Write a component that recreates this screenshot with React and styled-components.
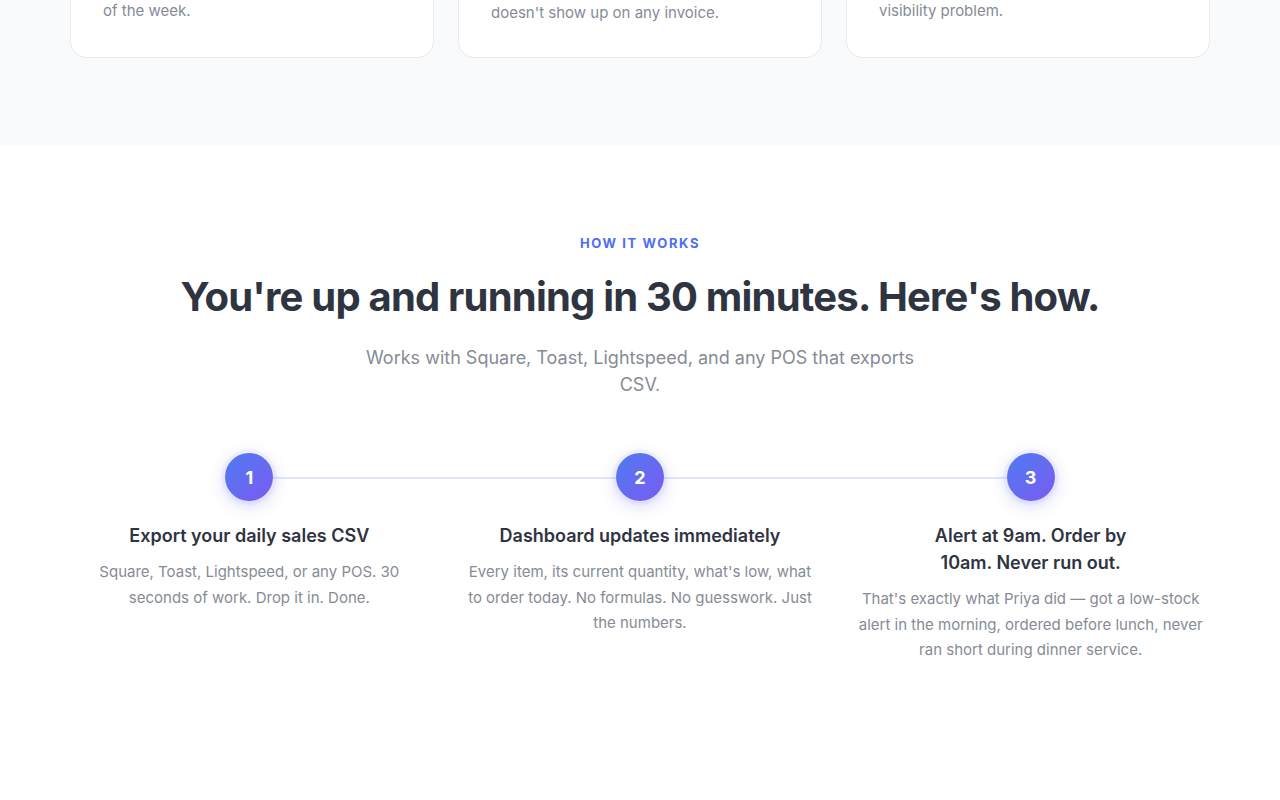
import React from 'react'
import styled, { createGlobalStyle } from 'styled-components'

const Global = createGlobalStyle`
  * { box-sizing: border-box; }
  body {
    margin: 0;
    font-family: Inter, "Noto Sans", sans-serif;
    background: #ffffff;
    -webkit-font-smoothing: antialiased;
  }
`

const ProblemSection = styled.section`
  background: #f9fafb;
  height: 145px;
  overflow: hidden;
  display: flex;
  flex-direction: column;
  justify-content: flex-end;
  padding-bottom: 87px;
`

const CardGrid = styled.div`
  width: 1140px;
  margin: 0 auto;
  display: grid;
  grid-template-columns: repeat(3, 1fr);
  gap: 24px;
  align-items: end;
`

const Card = styled.div`
  background: #ffffff;
  border: 1px solid #e8eaee;
  border-radius: 16px;
  padding: 32px 32px ${({ $pb }) => $pb}px;
`

const CardText = styled.p`
  margin: 0;
  font-size: 15px;
  line-height: 24px;
  color: #868b96;
`

const HowSection = styled.section`
  padding: 88px 0 120px;
  display: flex;
  flex-direction: column;
  align-items: center;
`

const Eyebrow = styled.div`
  font-size: 13px;
  font-weight: 700;
  letter-spacing: 1.6px;
  color: #4c6ef5;
  line-height: 20px;
  text-transform: uppercase;
`

const Heading = styled.h2`
  margin: 20px 0 0;
  font-size: 40px;
  font-weight: 700;
  letter-spacing: -0.8px;
  line-height: 48px;
  color: #2f3441;
  text-align: center;
`

const Sub = styled.p`
  margin: 23px 0 0;
  max-width: 560px;
  font-size: 18px;
  line-height: 27px;
  color: #868b96;
  text-align: center;
`

const Steps = styled.div`
  position: relative;
  width: 1140px;
  margin-top: 55px;
  display: grid;
  grid-template-columns: repeat(3, 1fr);
  gap: 32px;

  &::before {
    content: '';
    position: absolute;
    top: 24px;
    left: calc((100% - 64px) / 6);
    right: calc((100% - 64px) / 6);
    height: 2px;
    background: #e1e5fc;
  }
`

const Step = styled.div`
  display: flex;
  flex-direction: column;
  align-items: center;
  text-align: center;
  padding: 0 4px;
`

const Circle = styled.div`
  position: relative;
  z-index: 1;
  width: 48px;
  height: 48px;
  border-radius: 50%;
  background: linear-gradient(135deg, #4f7bf3 0%, #7a5bf0 100%);
  box-shadow: 0 4px 16px rgba(99, 102, 241, 0.3), 0 0 0 4px rgba(129, 140, 248, 0.06);
  color: #ffffff;
  font-size: 18px;
  font-weight: 700;
  display: flex;
  align-items: center;
  justify-content: center;
`

const StepTitle = styled.h3`
  margin: 21px 0 0;
  font-size: 18px;
  font-weight: 600;
  line-height: 27px;
  color: #2f3441;
`

const StepText = styled.p`
  margin: 10px 0 0;
  font-size: 15px;
  line-height: 25.5px;
  color: #868b96;
`

const cards = [
  { text: 'of the week.', pb: 34 },
  { text: "doesn't show up on any invoice.", pb: 32 },
  { text: 'visibility problem.', pb: 34 },
]

const steps = [
  {
    n: 1,
    title: 'Export your daily sales CSV',
    text: 'Square, Toast, Lightspeed, or any POS. 30 seconds of work. Drop it in. Done.',
    max: 320,
  },
  {
    n: 2,
    title: 'Dashboard updates immediately',
    text: "Every item, its current quantity, what's low, what to order today. No formulas. No guesswork. Just the numbers.",
    max: 350,
  },
  {
    n: 3,
    title: (
      <>
        Alert at 9am. Order by
        <br />
        10am. Never run out.
      </>
    ),
    text: "That's exactly what Priya did — got a low-stock alert in the morning, ordered before lunch, never ran short during dinner service.",
    max: 350,
  },
]

export default function App() {
  return (
    <>
      <Global />
      <ProblemSection>
        <CardGrid>
          {cards.map((c) => (
            <Card key={c.text} $pb={c.pb}>
              <CardText>{c.text}</CardText>
            </Card>
          ))}
        </CardGrid>
      </ProblemSection>
      <HowSection>
        <Eyebrow>How it works</Eyebrow>
        <Heading>You're up and running in 30 minutes. Here's how.</Heading>
        <Sub>Works with Square, Toast, Lightspeed, and any POS that exports CSV.</Sub>
        <Steps>
          {steps.map((s) => (
            <Step key={s.n}>
              <Circle>{s.n}</Circle>
              <StepTitle>{s.title}</StepTitle>
              <StepText style={{ maxWidth: s.max }}>{s.text}</StepText>
            </Step>
          ))}
        </Steps>
      </HowSection>
    </>
  )
}
